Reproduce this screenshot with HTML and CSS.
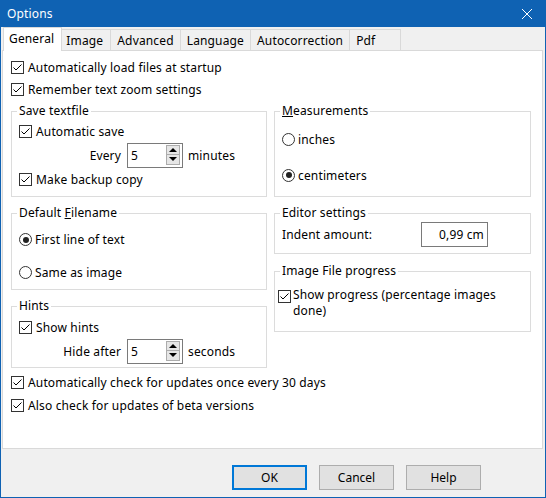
FILE: index.html
```html
<!DOCTYPE html>
<html lang="en">
<head>
    <meta charset="UTF-8">
    <title>Options</title>
    <link rel="stylesheet" href="styles.css">
</head>
<body>
    <svg width="0" height="0" class="defs">
        <symbol id="chk" viewBox="0 0 13 13">
            <rect x="0.5" y="0.5" width="12" height="12" fill="#fff" stroke="#333"/>
            <path d="M2.5 6.5 L5 9 L10.5 3.5" fill="none" stroke="#000" stroke-width="1"/>
        </symbol>
    </svg>

    <div class="window">
        <div class="titlebar">
            <span>Options</span>
            <svg class="close" width="12" height="12" viewBox="0 0 12 12">
                <path d="M1 1 L11 11 M11 1 L1 11" stroke="#fff" stroke-width="1"/>
            </svg>
        </div>

        <div class="tabs">
            <div class="tab active">General</div>
            <div class="tab">Image</div>
            <div class="tab">Advanced</div>
            <div class="tab">Language</div>
            <div class="tab">Autocorrection</div>
            <div class="tab">Pdf</div>
        </div>

        <div class="panel">
            <div class="row"><svg class="cb"><use href="#chk"/></svg>Automatically load files at startup</div>
            <div class="row"><svg class="cb"><use href="#chk"/></svg>Remember text zoom settings</div>

            <div class="columns">
                <div class="col">
                    <fieldset class="group save">
                        <legend>Save textfile</legend>
                        <div class="row"><svg class="cb"><use href="#chk"/></svg>Automatic save</div>
                        <div class="row spin-row">
                            <span class="spin-label">Every</span>
                            <span class="spin">
                                <span class="val">5</span>
                                <span class="arrows"><span class="up"></span><span class="down"></span></span>
                            </span>
                            <span>minutes</span>
                        </div>
                        <div class="row"><svg class="cb"><use href="#chk"/></svg>Make backup copy</div>
                    </fieldset>

                    <fieldset class="group filename">
                        <legend>Default <u>F</u>ilename</legend>
                        <div class="row tall"><span class="rb on"></span>First line of text</div>
                        <div class="row tall"><span class="rb"></span>Same as image</div>
                    </fieldset>

                    <fieldset class="group hints">
                        <legend>Hints</legend>
                        <div class="row"><svg class="cb"><use href="#chk"/></svg>Show hints</div>
                        <div class="row spin-row">
                            <span class="spin-label">Hide after</span>
                            <span class="spin">
                                <span class="val">5</span>
                                <span class="arrows"><span class="up"></span><span class="down"></span></span>
                            </span>
                            <span>seconds</span>
                        </div>
                    </fieldset>
                </div>

                <div class="col">
                    <fieldset class="group measure">
                        <legend><u>M</u>easurements</legend>
                        <div class="row taller"><span class="rb"></span>inches</div>
                        <div class="row taller"><span class="rb on"></span>centimeters</div>
                    </fieldset>

                    <fieldset class="group editor">
                        <legend>Editor settings</legend>
                        <div class="row field-row">
                            <span class="field-label">Indent amount:</span>
                            <span class="field">0,99 cm</span>
                        </div>
                    </fieldset>

                    <fieldset class="group progress">
                        <legend>Image File progress</legend>
                        <div class="row wrap"><svg class="cb"><use href="#chk"/></svg><span class="wrap-text">Show progress (percentage images done)</span></div>
                    </fieldset>
                </div>
            </div>

            <div class="bottom-rows">
                <div class="row"><svg class="cb"><use href="#chk"/></svg>Automatically check for updates once every 30 days</div>
                <div class="row"><svg class="cb"><use href="#chk"/></svg>Also check for updates of beta versions</div>
            </div>
        </div>

        <div class="footer">
            <button class="default">OK</button>
            <button>Cancel</button>
            <button>Help</button>
        </div>
    </div>
</body>
</html>
```

FILE: styles.css
```css
* {
    box-sizing: border-box;
}

body {
    margin: 0;
    font-family: "Noto Sans", "Segoe UI", sans-serif;
    font-size: 12px;
    letter-spacing: 0.15px;
    color: #000;
}

.defs {
    position: absolute;
}

.window {
    width: 546px;
    height: 498px;
    display: flex;
    flex-direction: column;
    background: #f0f0f0;
    border: 1px solid #0f62b3;
    border-top: 0;
}

.titlebar {
    height: 27px;
    flex: none;
    background: #0f62b3;
    color: #fff;
    display: flex;
    align-items: center;
    justify-content: space-between;
    padding: 0 12px 0 6px;
}

.tabs {
    height: 23px;
    flex: none;
    display: flex;
    align-items: flex-end;
    padding-left: 4px;
}

.tab {
    height: 21px;
    min-width: 52px;
    padding: 1px 6px 0 6px;
    border: 1px solid #d9d9d9;
    border-bottom: 0;
    margin-left: -1px;
    background: #f0f0f0;
    display: flex;
    align-items: center;
}

.tab.active {
    height: 24px;
    margin: 0 -2px -1px -2px;
    padding: 0 7px 2px 5px;
    background: #fff;
    position: relative;
    z-index: 1;
}

.panel {
    flex: 1;
    margin: 0 2px 0 1px;
    background: #fff;
    border: 1px solid #d9d9d9;
    padding: 5px 11px 0 8px;
}

.row {
    display: flex;
    align-items: center;
    height: 22px;
    white-space: nowrap;
}

.row.tall {
    height: 33px;
}

.row.taller {
    height: 36px;
}

.cb {
    width: 13px;
    height: 13px;
    flex: none;
    margin-right: 4px;
}

.rb {
    width: 13px;
    height: 13px;
    flex: none;
    margin-right: 3px;
    border: 1px solid #333;
    border-radius: 50%;
    display: flex;
    align-items: center;
    justify-content: center;
}

.rb.on::after {
    content: "";
    width: 6px;
    height: 6px;
    border-radius: 50%;
    background: #222;
}

.columns {
    display: grid;
    grid-template-columns: 256px 257px;
    column-gap: 7px;
    align-items: start;
    margin-top: 3px;
}

.col {
    display: flex;
    flex-direction: column;
    gap: 8px;
}

.group {
    margin: 0;
    min-width: 0;
    border: 1px solid #dcdcdc;
    padding: 0 6px 0 7px;
}

.group legend {
    padding: 0 2px;
    margin-left: -2px;
    line-height: 16px;
}

.save {
    padding-top: 1px;
    padding-bottom: 6px;
}

.filename {
    padding-top: 2px;
}

.hints {
    padding-top: 2px;
    padding-bottom: 3px;
}

.measure {
    padding-top: 2px;
    padding-bottom: 3px;
}

.editor {
    padding-top: 1px;
    padding-bottom: 6px;
}

.progress {
    margin-top: 1px;
    padding: 8px 6px 12px 3px;
}

.progress legend {
    margin-left: 2px;
}

.spin-row {
    height: 26px;
}

.spin-label {
    width: 102px;
    text-align: right;
}

.spin {
    width: 56px;
    height: 25px;
    margin: 0 5px 0 6px;
    border: 1px solid #7a7a7a;
    display: flex;
}

.spin .val {
    flex: 1;
    padding-left: 3px;
    line-height: 23px;
}

.arrows {
    width: 14px;
    margin: 1px 2px 2px 0;
    display: flex;
    flex-direction: column;
}

.arrows span {
    flex: 1;
    background: #e6e6e6;
    border: 1px solid #acacac;
    display: flex;
    align-items: center;
    justify-content: center;
}

.arrows .down {
    border-top: 0;
}

.arrows .up::after {
    content: "";
    border-left: 4px solid transparent;
    border-right: 4px solid transparent;
    border-bottom: 4px solid #000;
}

.arrows .down::after {
    content: "";
    border-left: 4px solid transparent;
    border-right: 4px solid transparent;
    border-top: 4px solid #000;
}

.field-row {
    height: 25px;
}

.field-label {
    width: 139px;
}

.field {
    width: 67px;
    height: 25px;
    border: 1px solid #7a7a7a;
    text-align: right;
    padding-right: 3px;
    line-height: 23px;
}

.row.wrap {
    height: auto;
    align-items: flex-start;
    line-height: 16px;
    white-space: normal;
}

.row.wrap .cb {
    margin-top: 3px;
    margin-right: 2px;
}

.wrap-text {
    max-width: 228px;
}

.bottom-rows {
    margin-top: 3px;
}

.bottom-rows .row {
    height: 23px;
}

.footer {
    height: 48px;
    flex: none;
    display: flex;
    justify-content: flex-end;
    align-items: flex-start;
    gap: 12px;
    padding: 16px 64px 0 0;
}

button {
    width: 75px;
    height: 25px;
    background: #e1e1e1;
    border: 1px solid #adadad;
    font: inherit;
    color: #000;
    padding: 0;
}

button.default {
    border: 2px solid #0078d7;
}
```
